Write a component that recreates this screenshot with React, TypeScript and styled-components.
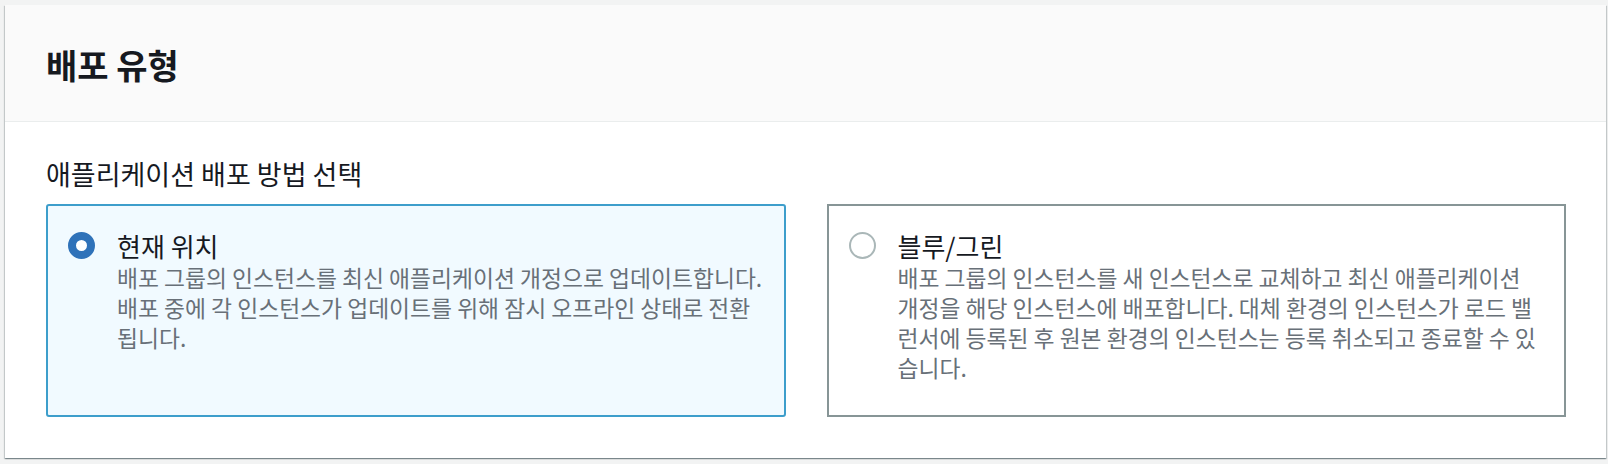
import React from "react";
import styled, { createGlobalStyle } from "styled-components";

const GlobalStyle = createGlobalStyle`
  html, body {
    margin: 0;
    padding: 0;
    background: #f2f3f3;
  }
  body {
    font-family: "Noto Sans CJK KR", "Noto Sans", sans-serif;
    color: #16191f;
  }
`;

const Page = styled.div`
  padding: 5px 2px 7px 5px;
`;

const Container = styled.section`
  background: #ffffff;
  box-shadow: 0 1px 1px 0 rgba(0, 28, 36, 0.3),
    1px 1px 1px 0 rgba(0, 28, 36, 0.15),
    -1px 1px 1px 0 rgba(0, 28, 36, 0.15);
`;

const Header = styled.header`
  box-sizing: border-box;
  height: 117px;
  display: flex;
  align-items: center;
  padding: 4px 40px 0 41px;
  background: #fafafa;
  border-bottom: 1px solid #eaeded;
`;

const Title = styled.h2`
  margin: 0;
  font-size: 34px;
  font-weight: 700;
  line-height: 40px;
  color: #16191f;
`;

const Body = styled.div`
  padding: 34px 40px 41px 41px;
`;

const Subtitle = styled.div`
  font-size: 27px;
  line-height: 36px;
  color: #16191f;
  margin-bottom: 12px;
`;

const Tiles = styled.div`
  display: grid;
  grid-template-columns: 1fr 1fr;
  column-gap: 41px;
`;

const Tile = styled.label<{ $selected?: boolean }>`
  display: flex;
  align-items: flex-start;
  padding: 25px 18.5px 32px 20px;
  border: 2px solid ${(p) => (p.$selected ? "#3d9ecb" : "#879596")};
  border-radius: ${(p) => (p.$selected ? "3px" : "0")};
  background: ${(p) => (p.$selected ? "#f1faff" : "#ffffff")};
  cursor: pointer;
`;

const Radio = styled.span<{ $checked?: boolean }>`
  flex: 0 0 auto;
  box-sizing: border-box;
  width: 27px;
  height: 27px;
  margin-top: 1px;
  margin-right: 22px;
  border-radius: 50%;
  background: #ffffff;
  border: ${(p) => (p.$checked ? "8px solid #2f72b9" : "2px solid #aab7b8")};
`;

const TileText = styled.div`
  flex: 1 1 auto;
  min-width: 0;
`;

const TileLabel = styled.div`
  font-size: 26px;
  line-height: 30px;
  color: #16191f;
`;

const TileDescription = styled.div`
  margin-top: 2px;
  font-size: 22.8px;
  line-height: 30px;
  color: #687078;
  word-break: break-all;
`;

const options = [
  {
    id: "in-place",
    label: "현재 위치",
    description:
      "배포 그룹의 인스턴스를 최신 애플리케이션 개정으로 업데이트합니다. 배포 중에 각 인스턴스가 업데이트를 위해 잠시 오프라인 상태로 전환됩니다.",
    selected: true,
  },
  {
    id: "blue-green",
    label: "블루/그린",
    description:
      "배포 그룹의 인스턴스를 새 인스턴스로 교체하고 최신 애플리케이션 개정을 해당 인스턴스에 배포합니다. 대체 환경의 인스턴스가 로드 밸런서에 등록된 후 원본 환경의 인스턴스는 등록 취소되고 종료할 수 있습니다.",
    selected: false,
  },
];

export default function App() {
  return (
    <>
      <GlobalStyle />
      <Page>
        <Container>
          <Header>
            <Title>배포 유형</Title>
          </Header>
          <Body>
            <Subtitle>애플리케이션 배포 방법 선택</Subtitle>
            <Tiles>
              {options.map((o) => (
                <Tile key={o.id} $selected={o.selected}>
                  <Radio $checked={o.selected} />
                  <TileText>
                    <TileLabel>{o.label}</TileLabel>
                    <TileDescription>{o.description}</TileDescription>
                  </TileText>
                </Tile>
              ))}
            </Tiles>
          </Body>
        </Container>
      </Page>
    </>
  );
}
